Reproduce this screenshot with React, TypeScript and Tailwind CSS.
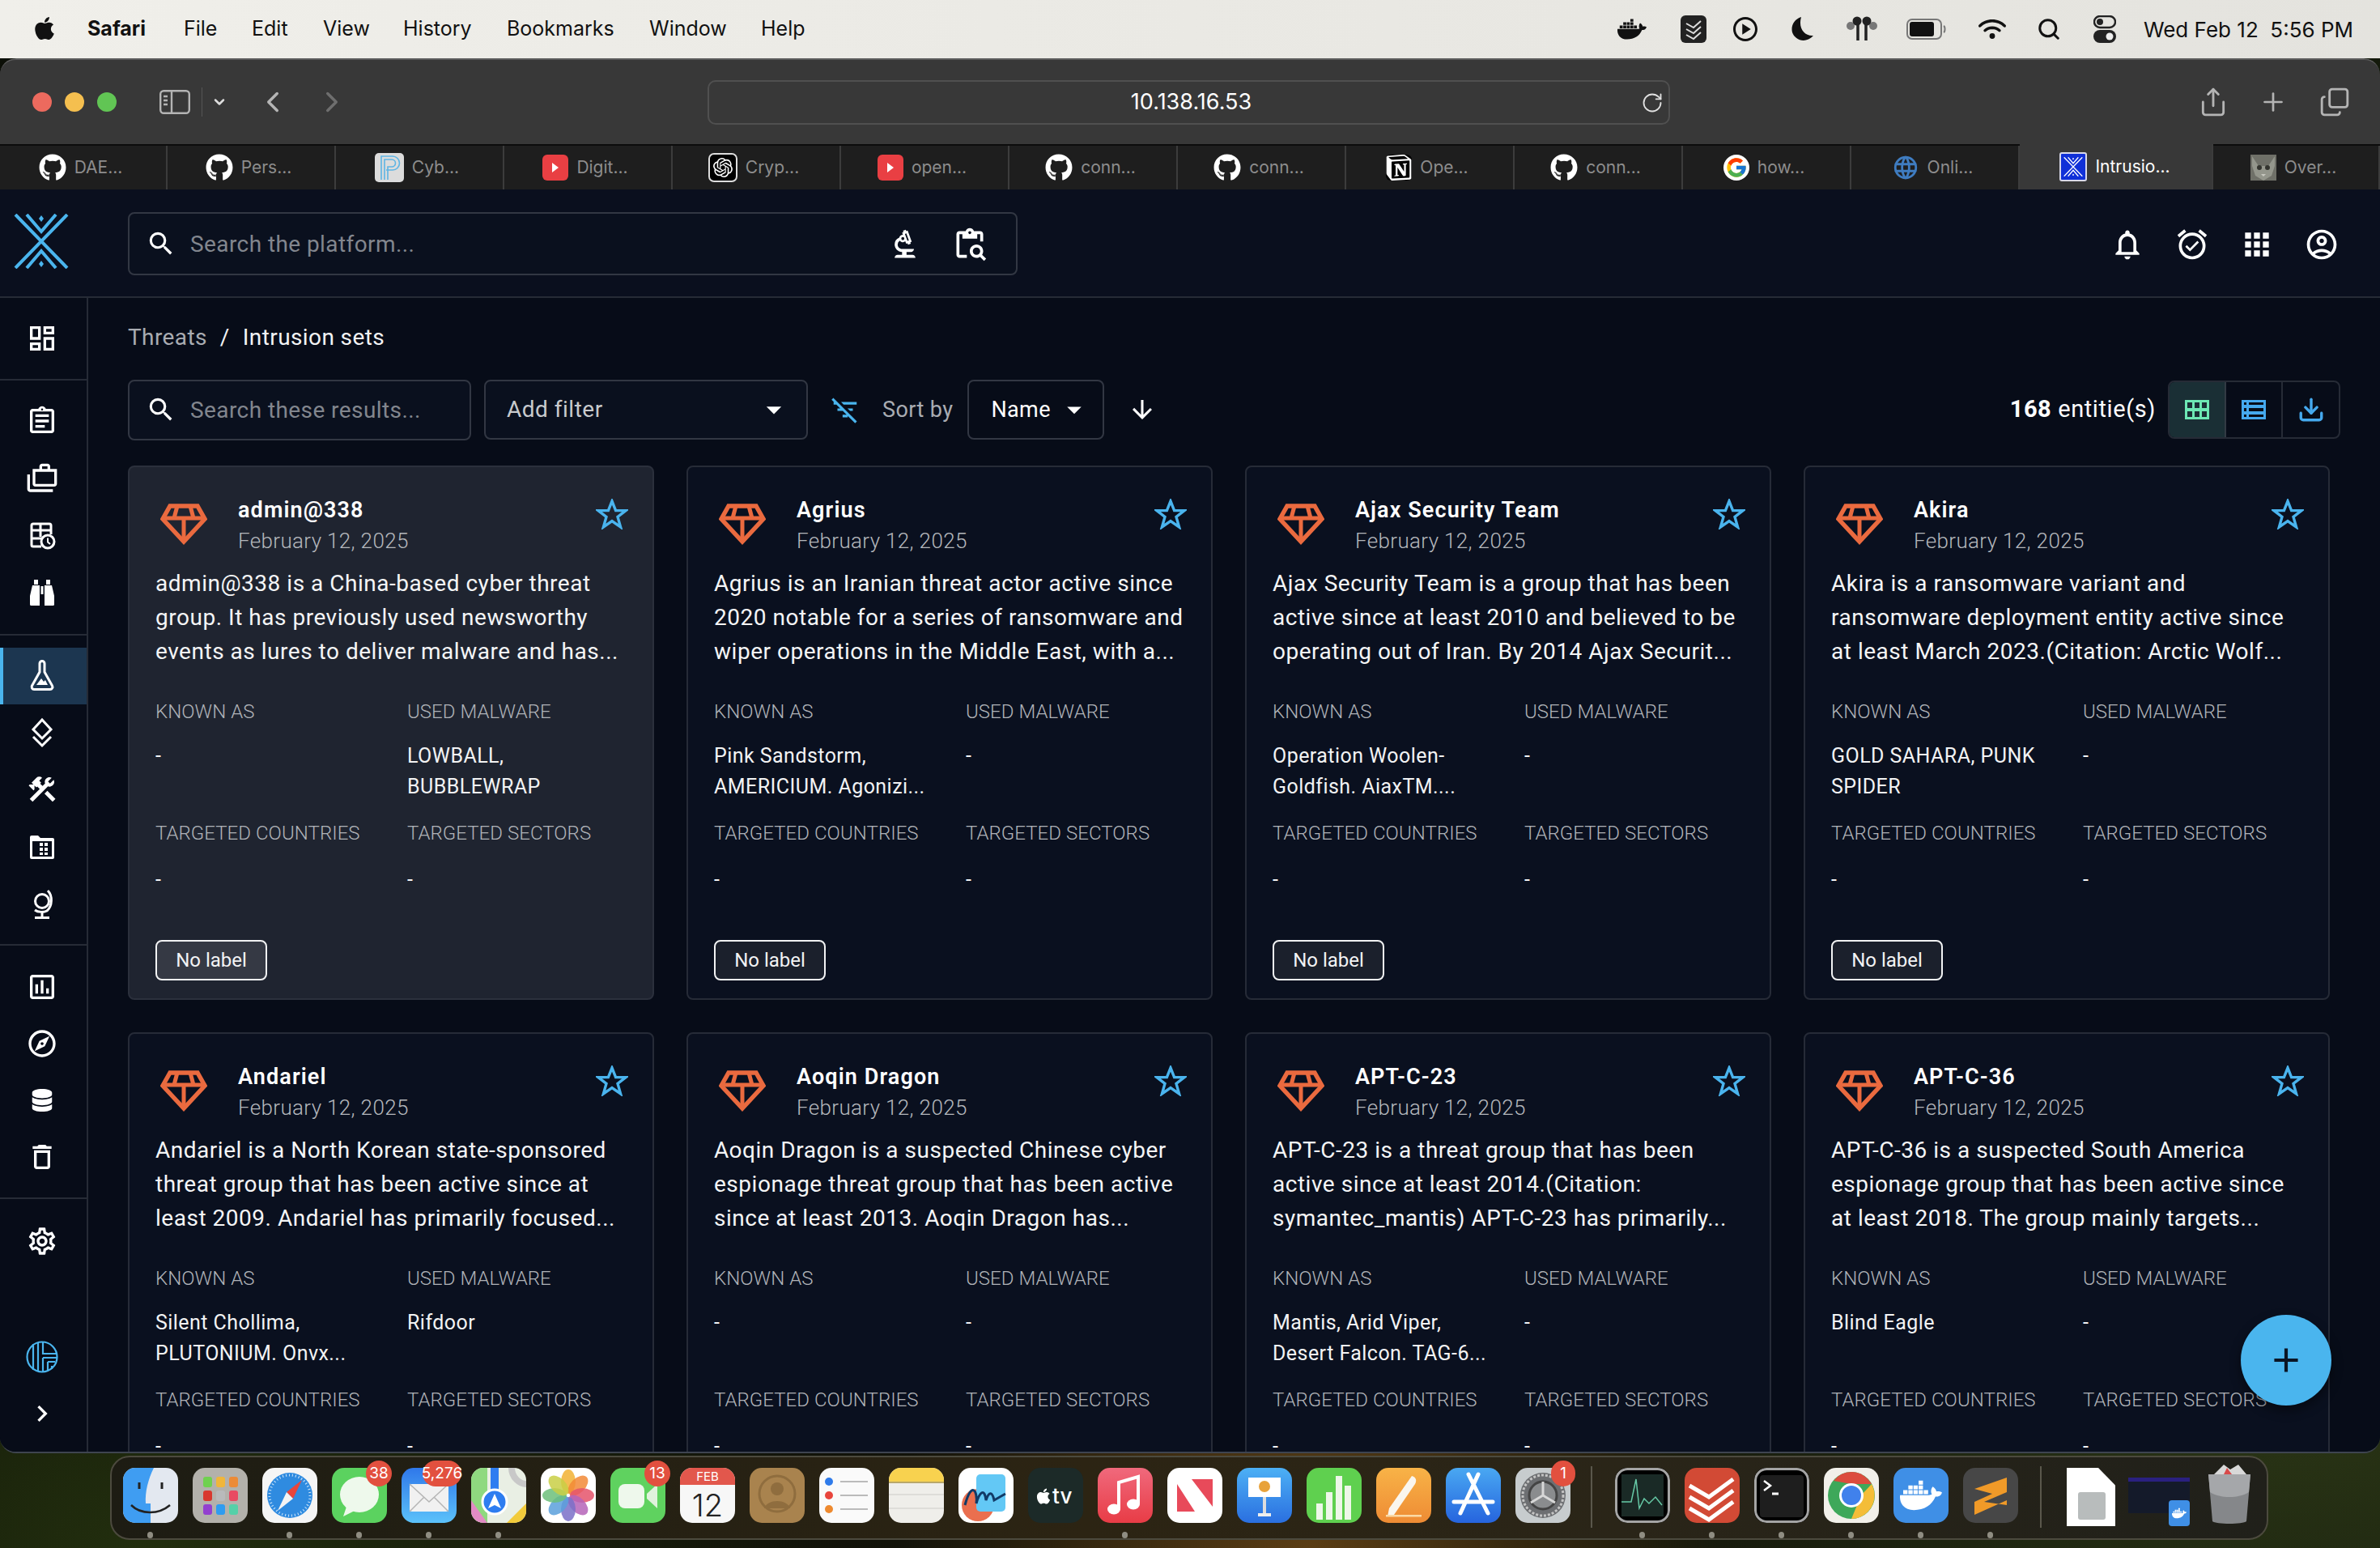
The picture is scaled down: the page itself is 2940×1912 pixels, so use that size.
import React from "react";
import { FaApple, FaDocker, FaGithub, FaWifi, FaDatabase } from "react-icons/fa6";
import { SiOpenai, SiNotion } from "react-icons/si";
import { FcGoogle } from "react-icons/fc";
import { TbWorld } from "react-icons/tb";
import {
  MdOutlineDashboard, MdOutlineAssignment, MdOutlineCases, MdOutlineConstruction,
  MdOutlineAssessment, MdOutlineExplore, MdOutlineDelete, MdOutlineSettings, MdChevronRight, MdOutlineSearch, MdOutlineBiotech,
  MdOutlineContentPasteSearch, MdOutlineNotifications, MdOutlineAlarmOn, MdApps, MdOutlineAccountCircle, MdFilterListOff,
  MdArrowDownward, MdArrowDropDown, MdAdd, MdOutlinePlayCircle,
} from "react-icons/md";
import { Search, Share, Plus, Copy, RotateCw, ChevronLeft, ChevronRight, ChevronDown, Download } from "lucide-react";

const Gem = () => (
  <svg width="58" height="52" viewBox="0 0 58 52" fill="none" stroke="#ea6a3f" strokeWidth="5.500" strokeLinejoin="miter">
    <path d="M12 3H46L55 19L29 47L3 19Z" />
    <path d="M3 18H55M29 18V47M21 3L17 18M37 3L41 18" strokeWidth="5" />
  </svg>
);

const Star = () => (
  <svg width="40" height="38" viewBox="0 0 40 38" fill="none" stroke="#4ab4ee" strokeWidth="3.400">
    <path d="M20 3L24.600 14.600H37L27 22.400L30.600 35L20 27.600L9.400 35L13 22.400L3 14.600H15.400Z" />
  </svg>
);

const OpenCtiLogo = ({ size = 68, color = "#4ab5ee" }: { size?: number; color?: string }) => (
  <svg width={size} height={size} viewBox="0 0 68 68" fill="none" stroke={color} strokeWidth="4">
    <path d="M2 1L66 67M66 1L2 67" />
    <path d="M16 1L34 22L52 1M16 67L34 46L52 67" />
    <path d="M34 2L37 6L34 10L31 6ZM34 58L37 62L34 66L31 62Z" fill={color} stroke="none" />
  </svg>
);

const FiligranLogo = () => (
  <svg width="40" height="40" viewBox="0 0 40 40" fill="none" stroke="#4ab5ee" strokeWidth="2.200">
    <circle cx="20" cy="20" r="18.500" />
    <path d="M9 4V36M15 2V38M21 2V16H38M21 21H38M21 21V38M27 26H36M27 26V37M32 31V35" />
  </svg>
);

const EventIcon = () => (
  <svg width="40" height="40" viewBox="0 0 40 40" fill="none" stroke="white" strokeWidth="3">
    <path d="M19 34H9a2 2 0 0 1-2-2V8a2 2 0 0 1 2-2h20a2 2 0 0 1 2 2v11" />
    <path d="M7 14H31M7 24H20M18 6V22" />
    <circle cx="27" cy="28" r="8" />
    <path d="M27 23.500V28.500L30 31" strokeWidth="2" />
  </svg>
);
const BinocularIcon = () => (
  <svg width="40" height="40" viewBox="0 0 40 40" fill="white">
    <path d="M10 4h5v6h-5zM25 4h5v6h-5zM8 11h9v25H6.500a1.500 1.500 0 0 1-1.500-1.500V24zM32 11h-9v25h10.500a1.500 1.500 0 0 0 1.500-1.500V24z" />
    <path d="M18.500 12h3v10h-3z" />
  </svg>
);
const FlaskIcon = () => (
  <svg width="40" height="40" viewBox="0 0 40 40" fill="none" stroke="white" strokeWidth="3">
    <path d="M17 4.500a3 3 0 0 1 6 0M17 4.500V15L7.500 32a3 3 0 0 0 2.600 4.500h19.800a3 3 0 0 0 2.600-4.500L23 15V4.500" />
    <path d="M13 31L19 23L22 27L24 25L27 31Z" fill="white" stroke="none" />
  </svg>
);
const LayersIcon = () => (
  <svg width="40" height="40" viewBox="0 0 40 40" fill="none" stroke="white" strokeWidth="3">
    <path d="M20 4L31 16L20 27L9 16Z" />
    <path d="M9 25L20 36L31 25" />
  </svg>
);
const FolderGridIcon = () => (
  <svg width="40" height="40" viewBox="0 0 40 40">
    <path d="M5 8a2 2 0 0 1 2-2h8l3 3h15a2 2 0 0 1 2 2v22a2 2 0 0 1-2 2H7a2 2 0 0 1-2-2z" fill="white" />
    <rect x="8" y="13" width="24" height="19" fill="#070d19" />
    <path d="M17 15h4v4h-4zM23 15h4v4h-4zM17 21h4v4h-4zM23 21h4v4h-4zM17 27h4v3h-4zM23 27h4v3h-4z" fill="white" />
  </svg>
);
const GlobeIcon = () => (
  <svg width="40" height="40" viewBox="0 0 40 40" fill="none" stroke="white" strokeWidth="3">
    <circle cx="20" cy="16" r="8.500" />
    <path d="M27 3C33 9 33 22 26 28C22 30 15 30 11 27M20 30V36M11 36.500H29" />
  </svg>
);
const GridViewIcon = () => (
  <svg width="30" height="24" viewBox="0 0 30 24" fill="#6de8b4">
    <path fillRule="evenodd" d="M0 0H30V24H0ZM3 3V10H9V3ZM12 3V10H18V3ZM21 3V10H27V3ZM3 14V21H9V14ZM12 14V21H18V14ZM21 14V21H27V14Z" />
  </svg>
);
const ListViewIcon = () => (
  <svg width="30" height="24" viewBox="0 0 30 24" fill="#45a9ee">
    <path fillRule="evenodd" d="M0 0H30V24H0ZM3 3V6H6V3ZM9 3V6H27V3ZM3 10V14H6V10ZM9 10V14H27V10ZM3 18V21H6V18ZM9 18V21H27V18Z" />
  </svg>
);

const I: React.FC<{ children: React.ReactNode; h?: string }> = ({ children, h = "h-[70px]" }) => <div className={`${h} flex items-center justify-center pr-[3px] text-white`}>{children}</div>;

const Sidebar = () => (
  <aside className="w-[109px] shrink-0 border-r-2 border-[#262b36] bg-[#070c18] flex flex-col">
    <div className="py-[15px] border-b-2 border-[#262b36]"><I><MdOutlineDashboard size={40} /></I></div>
    <div className="pt-[15px] pb-[16px] border-b-2 border-[#262b36]">
      <I h="h-[70.5px]"><MdOutlineAssignment size={40} /></I><I h="h-[70.5px]"><MdOutlineCases size={40} /></I><I h="h-[70.5px]"><EventIcon /></I><I h="h-[70.5px]"><BinocularIcon /></I>
    </div>
    <div className="pt-[15px] pb-[14px] border-b-2 border-[#262b36]">
      <div className="h-[70px] flex items-center justify-center text-white bg-[#1c3650] border-l-[4px] border-[#4ab5ee] pr-[7px]"><FlaskIcon /></div>
      <I><LayersIcon /></I><I><MdOutlineConstruction size={40} /></I><I h="h-[71px]"><FolderGridIcon /></I><I h="h-[71px]"><GlobeIcon /></I>
    </div>
    <div className="pt-[16px] pb-[15px] border-b-2 border-[#262b36]">
      <I><MdOutlineAssessment size={40} /></I><I><MdOutlineExplore size={40} /></I><I><FaDatabase size={28} /></I><I><MdOutlineDelete size={40} /></I>
    </div>
    <div className="pt-[17px]"><I><MdOutlineSettings size={40} /></I></div>
    <div className="mt-auto pb-[12px]"><I><FiligranLogo /></I><I><MdChevronRight size={40} /></I></div>
  </aside>
);

type C = { name: string; desc: string[]; known: string[]; malware: string[]; hover?: boolean };
const cards: C[] = [
  { name: "admin@338", hover: true, desc: ["admin@338 is a China-based cyber threat", "group. It has previously used newsworthy", "events as lures to deliver malware and has..."], known: ["-"], malware: ["LOWBALL,", "BUBBLEWRAP"] },
  { name: "Agrius", desc: ["Agrius is an Iranian threat actor active since", "2020 notable for a series of ransomware and", "wiper operations in the Middle East, with a..."], known: ["Pink Sandstorm,", "AMERICIUM. Agonizi..."], malware: ["-"] },
  { name: "Ajax Security Team", desc: ["Ajax Security Team is a group that has been", "active since at least 2010 and believed to be", "operating out of Iran. By 2014 Ajax Securit..."], known: ["Operation Woolen-", "Goldfish. AiaxTM...."], malware: ["-"] },
  { name: "Akira", desc: ["Akira is a ransomware variant and", "ransomware deployment entity active since", "at least March 2023.(Citation: Arctic Wolf..."], known: ["GOLD SAHARA, PUNK", "SPIDER"], malware: ["-"] },
  { name: "Andariel", desc: ["Andariel is a North Korean state-sponsored", "threat group that has been active since at", "least 2009. Andariel has primarily focused..."], known: ["Silent Chollima,", "PLUTONIUM. Onvx..."], malware: ["Rifdoor"] },
  { name: "Aoqin Dragon", desc: ["Aoqin Dragon is a suspected Chinese cyber", "espionage threat group that has been active", "since at least 2013. Aoqin Dragon has..."], known: ["-"], malware: ["-"] },
  { name: "APT-C-23", desc: ["APT-C-23 is a threat group that has been", "active since at least 2014.(Citation:", "symantec_mantis) APT-C-23 has primarily..."], known: ["Mantis, Arid Viper,", "Desert Falcon. TAG-6..."], malware: ["-"] },
  { name: "APT-C-36", desc: ["APT-C-36 is a suspected South America", "espionage group that has been active since", "at least 2018. The group mainly targets..."], known: ["Blind Eagle"], malware: ["-"] },
];

const Label = ({ children }: { children: React.ReactNode }) => <div className="h-[36px] leading-[36px] text-[24px] tracking-[0.05px] font-light text-[#b0b3b8] whitespace-nowrap">{children}</div>;
const Val = ({ lines }: { lines: string[] }) => <div className="text-[25px] leading-[38px] tracking-[0.45px] text-[#f2f3f4] whitespace-nowrap">{lines.map((l) => <div key={l}>{l}</div>)}</div>;

const Card = ({ c }: { c: C }) => (
  <div className={`h-[660px] rounded-[8px] border-2 px-[32px] ${c.hover ? "bg-[#1f2430] border-[#2b303c]" : "bg-[#0a101f] border-[#262b37]"}`}>
    <div className="flex pt-[33px] h-[113px]">
      <div className="ml-[6px] mt-[12px] w-[58px]"><Gem /></div>
      <div className="ml-[38px]">
        <div className="h-[38px] pt-[1px] leading-[38px] text-[27px] font-semibold text-white tracking-[1.1px] whitespace-nowrap">{c.name}</div>
        <div className="h-[40px] leading-[40px] text-[26px] tracking-[0.35px] font-light text-[#b4b7bc] whitespace-nowrap">February 12, 2025</div>
      </div>
      <div className="ml-auto mt-[6px] -mr-[2px]"><Star /></div>
    </div>
    <div className="mt-[10px] text-[28px] leading-[42px] tracking-[0.52px] text-[#f4f5f6] whitespace-nowrap">{c.desc.map((l) => <div key={l}>{l}</div>)}</div>
    <div className="mt-[35px] grid grid-cols-[311px_1fr]">
      <div><Label>KNOWN AS</Label></div><div><Label>USED MALWARE</Label></div>
      <div className="mt-[18px] h-[76px]"><Val lines={c.known} /></div><div className="mt-[18px] h-[76px]"><Val lines={c.malware} /></div>
      <div className="mt-[20px] h-[38px]"><Label>TARGETED COUNTRIES</Label></div><div className="mt-[20px] h-[38px]"><Label>TARGETED SECTORS</Label></div>
      <div className="mt-[19px] h-[38px]"><Val lines={["-"]} /></div><div className="mt-[19px] h-[38px]"><Val lines={["-"]} /></div>
    </div>
    <div className={`mt-[55px] w-[138px] h-[50px] rounded-[8px] border-2 border-[#f2f3f4] flex items-center justify-center text-[24px] text-[#f2f3f4] ${c.hover ? "bg-[#353944]" : "bg-[#1b202c]"}`}>No label</div>
  </div>
);

const Box = ({ className, children }: { className: string; children: React.ReactNode }) => (
  <div className={`rounded-[8px] border-2 border-[#323743] flex items-center ${className}`}>{children}</div>
);

const App_OpenCTI = () => (
  <div className="relative flex-1 min-h-0 flex flex-col bg-[#070c18] [font-family:Roboto,sans-serif]">
    <header className="h-[134px] shrink-0 border-b-2 border-[#262b36] bg-[#0a0f1e] flex items-center">
      <div className="w-[109px] pl-[17px] shrink-0 -mt-[4px]"><OpenCtiLogo /></div>
      <div className="ml-[49px] mt-[1px]">
        <Box className="w-[1099px] h-[78px] pl-[20px] pr-[10px] bg-[#0a101e]">
          <MdOutlineSearch size={38} className="text-white" />
          <span className="ml-[17px] mt-[3px] text-[28px] tracking-[0.42px] text-[#82868e]">Search the platform...</span>
          <div className="ml-auto flex gap-[36px] text-white pr-[25px] mt-[2px]">
            <MdOutlineBiotech size={44} /><MdOutlineContentPasteSearch size={44} />
          </div>
        </Box>
      </div>
      <div className="ml-auto pr-[50px] flex gap-[36px] text-white mt-[3px]">
        <MdOutlineNotifications size={44} /><MdOutlineAlarmOn size={44} /><MdApps size={44} /><MdOutlineAccountCircle size={44} />
      </div>
    </header>
    <div className="flex flex-1 min-h-0">
      <Sidebar />
      <main className="flex-1 pl-[49px] pr-[49px] overflow-hidden">
        <div className="h-[101px] pt-[31px] text-[28px] leading-[36px] tracking-[0.4px] text-[#f2f3f4] flex">
          <span className="text-[#a9acb2]">Threats</span><span className="mx-[16px]">/</span><span>Intrusion sets</span>
        </div>
        <div className="flex items-center h-[74px]">
          <Box className="w-[424px] h-[75px] pl-[20px] bg-[#0a101e]">
            <MdOutlineSearch size={38} className="text-white" />
            <span className="ml-[17px] mt-[2px] text-[28px] tracking-[0.42px] text-[#82868e]">Search these results...</span>
          </Box>
          <Box className="ml-[16px] w-[400px] h-[74px] pl-[26px] pr-[18px] bg-[#0a101e]">
            <span className="text-[28px] tracking-[0.5px] text-[#c8cacd]">Add filter</span>
            <MdArrowDropDown size={44} className="ml-auto text-white" />
          </Box>
          <MdFilterListOff size={38} className="ml-[27px] text-[#4ab5ee]" />
          <span className="ml-[27px] text-[27px] tracking-[0.4px] text-[#a9acb2]">Sort by</span>
          <Box className="ml-[18px] w-[169px] h-[74px] pl-[27px] pr-[14px]">
            <span className="text-[27px] text-white tracking-[0.4px]">Name</span>
            <MdArrowDropDown size={42} className="ml-auto text-white" />
          </Box>
          <MdArrowDownward size={36} className="ml-[29px] text-white" />
          <div className="ml-auto text-[29px] tracking-[0.6px] text-white"><span className="font-bold">168</span> entitie(s)</div>
          <div className="ml-[15px] flex h-[72px] rounded-[8px] border-2 border-[#262b36] overflow-hidden">
            <div className="w-[70px] bg-[#1a2f35] flex items-center justify-center border-r-2 border-[#323a44]"><GridViewIcon /></div>
            <div className="w-[70px] flex items-center justify-center border-r-2 border-[#262b36]"><ListViewIcon /></div>
            <div className="w-[69px] flex items-center justify-center text-[#45a9ee]"><Download size={34} strokeWidth={2.400} /></div>
          </div>
        </div>
        <div className="mt-[32px] grid grid-cols-[repeat(4,650px)] gap-[40px]">
          {cards.map((c) => <Card key={c.name} c={c} />)}
        </div>
      </main>
    </div>
    <div className="absolute left-[2768px] top-[1390px] w-[112px] h-[112px] rounded-full bg-[#4ab5ee] flex items-center justify-center text-[#0b1524] shadow-[0_6px_14px_rgba(0,0,0,0.45)]"><MdAdd size={50} /></div>
  </div>
);

const Yt = () => <div className="w-[32px] h-[32px] rounded-[6px] bg-[#e93f43] flex items-center justify-center"><div className="w-0 h-0 border-y-[6px] border-y-transparent border-l-[8px] border-l-white" /></div>;
const Gh = () => <FaGithub size={34} color="white" />;
const PP = () => (
  <svg width="36" height="36" viewBox="0 0 36 36"><rect width="36" height="36" rx="5" fill="#dcdcdc" /><path d="M8 33V4H22a8 8 0 0 1 0 17H14M12 33V8H21a4 4 0 0 1 0 9H16V33" fill="none" stroke="#5db4e4" strokeWidth="1.600" /></svg>
);
const Ai = () => <div className="w-[36px] h-[36px] rounded-[7px] bg-black flex items-center justify-center border-2 border-[#ddd]"><SiOpenai size={24} color="white" /></div>;
const No = () => <div className="w-[32px] h-[32px] rounded-[6px] bg-black flex items-center justify-center"><SiNotion size={32} color="white" /></div>;
const Go = () => <div className="w-[32px] h-[32px] rounded-full bg-white flex items-center justify-center"><FcGoogle size={28} /></div>;
const Cti = () => <div className="w-[34px] h-[36px] rounded-[3px] bg-[#1030d8] border-2 border-[#d8d8e8] flex items-center justify-center"><OpenCtiLogo size={24} color="white" /></div>;
const Kitten = () => (
  <svg width="32" height="32" viewBox="0 0 32 32"><rect width="32" height="32" fill="#6f7068" /><path d="M2 2L10 14H22L30 2V14L26 26L16 32L6 26L2 14Z" fill="#94968c" /><circle cx="11" cy="16" r="3" fill="#33342f" /><circle cx="21" cy="16" r="3" fill="#33342f" /><path d="M13 24h6l-3 3z" fill="#c7c8c0" /></svg>
);

const tabs: { t: string; i: React.ReactNode; w: number; a?: boolean }[] = [
  { t: "DAE...", i: <Gh />, w: 207 }, { t: "Pers...", i: <Gh />, w: 208 }, { t: "Cyb...", i: <PP />, w: 208 }, { t: "Digit...", i: <Yt />, w: 208 },
  { t: "Cryp...", i: <Ai />, w: 208 }, { t: "open...", i: <Yt />, w: 208 }, { t: "conn...", i: <Gh />, w: 208 }, { t: "conn...", i: <Gh />, w: 208 },
  { t: "Ope...", i: <No />, w: 208 }, { t: "conn...", i: <Gh />, w: 208 }, { t: "how...", i: <Go />, w: 208 },
  { t: "Onli...", i: <TbWorld size={34} color="#3f7cc0" />, w: 208 }, { t: "Intrusio...", i: <Cti />, w: 239, a: true }, { t: "Over...", i: <Kitten />, w: 206 },
];

const MenuBar = () => (
  <div className="h-[72px] shrink-0 bg-[linear-gradient(90deg,#f0efea,#e4e3de)] flex items-center text-[#111] text-[25px] [font-family:Inter,sans-serif] relative">
    <FaApple size={32} className="ml-[39px] -mt-[3px]" />
    <span className="ml-[37px] font-bold w-[119px]">Safari</span>
    <span className="w-[84px]">File</span><span className="w-[88px]">Edit</span><span className="w-[99px]">View</span><span className="w-[128px]">History</span>
    <span className="w-[176px]">Bookmarks</span><span className="w-[138px]">Window</span><span>Help</span>
    <div className="ml-auto flex items-center pr-[33px]">
      <FaDocker size={36} />
      <svg width="32" height="34" viewBox="0 0 32 34" className="ml-[42px]"><rect width="32" height="34" rx="6" fill="#222" /><path d="M7 10l9 5 9-8M7 17l9 5 9-8M7 24l9 5 9-8" stroke="#ddd" strokeWidth="2" fill="none" /></svg>
      <MdOutlinePlayCircle size={36} className="ml-[30px]" />
      <svg width="30" height="32" viewBox="0 0 30 32" className="ml-[38px]"><path d="M13 1C4 4 0 12 2 20C5 29 18 35 28 24C17 25 9 15 13 1Z" fill="#111" /></svg>
      <svg width="40" height="32" viewBox="0 0 40 32" className="ml-[38px]"><circle cx="6" cy="12" r="5" fill="#777" /><circle cx="34" cy="12" r="5" fill="#777" /><circle cx="14" cy="6" r="5.500" fill="#222" /><circle cx="26" cy="6" r="5.500" fill="#222" /><path d="M15 10v20M25 10v20" stroke="#222" strokeWidth="3.500" /></svg>
      <svg width="50" height="26" viewBox="0 0 50 26" className="ml-[35px]"><rect x="1" y="1" width="42" height="24" rx="6" fill="none" stroke="#777" strokeWidth="2" /><rect x="4" y="4" width="30" height="18" rx="3" fill="#111" /><path d="M46 9c2 1 2 7 0 8" stroke="#777" strokeWidth="2" fill="none" /></svg>
      <FaWifi size={34} className="ml-[39px]" />
      <Search size={30} strokeWidth={2.400} className="ml-[38px]" />
      <svg width="28" height="34" viewBox="0 0 28 34" className="ml-[40px]"><rect x="1" y="1" width="26" height="14" rx="7" fill="none" stroke="#222" strokeWidth="2.400" /><circle cx="8" cy="8" r="4" fill="#222" /><rect y="18" width="28" height="16" rx="8" fill="#222" /><circle cx="20" cy="26" r="4.500" fill="#eee" /></svg>
      <span className="ml-[34px] whitespace-pre text-[26px]">Wed Feb 12  5:56 PM</span>
    </div>
  </div>
);

const Toolbar = () => (
  <div className="h-[106px] shrink-0 bg-[#383838] border-t-2 border-[#5c5c5c] rounded-t-[20px] flex items-center relative text-[#b4b4b4]">
    <div className="flex gap-[16px] ml-[40px]">
      <div className="w-[24px] h-[24px] rounded-full bg-[#ec6a5e]" /><div className="w-[24px] h-[24px] rounded-full bg-[#f5bf4f]" /><div className="w-[24px] h-[24px] rounded-full bg-[#61c554]" />
    </div>
    <svg width="38" height="30" viewBox="0 0 38 30" fill="none" stroke="#b4b4b4" strokeWidth="2.400" className="ml-[53px]"><rect x="1.200" y="1.200" width="35.600" height="27.600" rx="4" /><path d="M15 1v28M5 8h5M5 13h5M5 18h5" /></svg>
    <div className="w-[1px] h-[36px] bg-[#555] ml-[14px]" />
    <ChevronDown size={20} strokeWidth={3} className="ml-[11px] text-[#ddd]" />
    <ChevronLeft size={42} strokeWidth={2} className="ml-[35px]" />
    <ChevronRight size={42} strokeWidth={2} className="ml-[31px] text-[#6e6e6e]" />
    <div className="ml-[443px] w-[1189px] h-[55px] pl-[6px] rounded-[10px] border-2 border-[#505050] relative flex items-center justify-center text-[27px] text-white [font-family:Inter,sans-serif]">
      10.138.16.53
      <RotateCw size={28} strokeWidth={1.600} className="absolute right-[6px] top-[12px] text-[#e0e0e0]" />
    </div>
    <Share size={38} strokeWidth={1.800} className="ml-[652px]" />
    <Plus size={36} strokeWidth={1.800} className="ml-[37px]" />
    <Copy size={38} strokeWidth={1.800} className="ml-[39px] -scale-x-100 rotate-180" />
  </div>
);

const Tabs = () => (
  <div className="h-[56px] shrink-0 bg-[#1e1e1e] border-t-2 border-[#0c0c0c] flex [font-family:Inter,sans-serif] text-[21px]">
    {tabs.map((x, i) => (
      <div key={i} style={{ width: x.w }} className={`shrink-0 flex items-center justify-center gap-[10px] border-r-2 border-[#3c3c3c] ${x.a ? "bg-[#383838] text-white -mt-[2px] pr-[2px]" : "text-[#8d8d8d] pr-[6px]"}`}>
        {x.i}<span>{x.t}</span>
      </div>
    ))}
  </div>
);

const S: React.FC<{ children: React.ReactNode }> = ({ children }) => <svg width="68" height="68" viewBox="0 0 68 68">{children}</svg>;
const dock: { k: string; dot?: boolean; badge?: string; bw?: number; el: React.ReactNode }[] = [
  { k: "finder", dot: true, el: <S><rect width="68" height="68" fill="#e3e8f0" /><path d="M0 0H38C31 14 27 30 28 44L34 44V68H0Z" fill="#3f9df2" /><path d="M20 18v8M48 18v8" stroke="#222" strokeWidth="3" /><path d="M10 46C22 58 44 58 58 46" stroke="#222" strokeWidth="2.500" fill="none" /></S> },
  { k: "launch", el: <S><rect width="68" height="68" fill="#b3b1ab" />{[["#6fd14f", "#f0b63a", "#ec8b36"], ["#d8382e", "#b9babb", "#e84a62"], ["#9340cf", "#2f9cf0", "#55d0a8"]].flatMap((r, y) => r.map((c, x) => <rect key={`${x}${y}`} x={13 + x * 16} y={11 + y * 17} width="11" height="13" rx="3" fill={c} />))}</S> },
  { k: "safari", dot: true, el: <S><rect width="68" height="68" fill="#f5f5f5" /><circle cx="34" cy="34" r="28" fill="#2f8be0" /><circle cx="34" cy="34" r="25" fill="none" stroke="#cfe6fb" strokeWidth="3" strokeDasharray="1 3" /><path d="M49 15L30 30L38 38Z" fill="#e8453c" /><path d="M19 53L30 30L38 38Z" fill="#f4f4f4" /></S> },
  { k: "messages", dot: true, badge: "38", el: <S><rect width="68" height="68" fill="#5bd25f" /><ellipse cx="34" cy="33" rx="24" ry="22" fill="#eef9ec" /><path d="M18 48L14 60L30 52Z" fill="#eef9ec" /></S> },
  { k: "mail", dot: true, badge: "5,276", bw: 48, el: <S><defs><linearGradient id="m" x1="0" y1="0" x2="0" y2="1"><stop offset="0" stopColor="#2f78ea" /><stop offset="1" stopColor="#5cc2fa" /></linearGradient></defs><rect width="68" height="68" fill="url(#m)" /><rect x="10" y="20" width="48" height="34" rx="3" fill="#f1f1f1" /><path d="M10 20L34 42L58 20M10 54L28 36M58 54L40 36" stroke="#b5b5b5" strokeWidth="1.500" fill="none" /></S> },
  { k: "maps", dot: true, el: <S><rect width="68" height="68" fill="#e9efe4" /><path d="M0 0H20V68H0Z" fill="#8fd97f" /><path d="M0 40L20 68H0Z" fill="#e28bc4" /><path d="M44 68L68 44V68Z" fill="#f2cb3b" /><path d="M50 0C50 12 60 20 68 20" stroke="#c8c8c8" strokeWidth="8" fill="none" /><rect x="24" y="0" width="10" height="40" fill="#2e7df0" /><circle cx="29" cy="42" r="15" fill="#2e7df0" stroke="#fff" strokeWidth="3" /><path d="M29 32L37 50L29 46L21 50Z" fill="#fff" /></S> },
  { k: "photos", el: <S><rect width="68" height="68" fill="#fff" />{["#f2b134", "#f28a36", "#e5536b", "#b564b8", "#7a70c8", "#5aa0dc", "#6cc07a", "#c9cf45"].map((c, i) => <ellipse key={c} cx="34" cy="17" rx="9" ry="15" fill={c} opacity="0.85" transform={`rotate(${i * 45 + 0} 34 34)`} />)}</S> },
  { k: "ft", badge: "13", el: <S><rect width="68" height="68" fill="#5fd25f" /><rect x="10" y="20" width="32" height="30" rx="8" fill="#eef8ec" /><path d="M45 32L58 20V50L45 38Z" fill="#dff2dc" /></S> },
  { k: "cal", el: <S><rect width="68" height="68" fill="#f7f7f7" /><rect width="68" height="21" fill="#e2574c" /><text x="34" y="16" textAnchor="middle" fontSize="15" fill="#fff" fontFamily="Inter">FEB</text><text x="34" y="60" textAnchor="middle" fontSize="38" fill="#222" fontFamily="Inter" fontWeight="300">12</text></S> },
  { k: "contacts", el: <S><rect width="68" height="68" fill="#a9834e" /><circle cx="34" cy="32" r="22" fill="none" stroke="#8f6d3e" strokeWidth="3" /><circle cx="34" cy="26" r="8" fill="#8f6d3e" /><path d="M18 50C22 38 46 38 50 50" fill="#8f6d3e" /></S> },
  { k: "rem", el: <S><rect width="68" height="68" fill="#fafafa" /><circle cx="12" cy="17" r="5" fill="#2f7bea" /><circle cx="12" cy="34" r="5" fill="#e8453c" /><circle cx="12" cy="51" r="5" fill="#ee8a2f" /><path d="M26 17H60M26 34H60M26 51H60" stroke="#bbb" strokeWidth="2" /></S> },
  { k: "notes", el: <S><rect width="68" height="68" fill="#efeeea" /><rect width="68" height="17" fill="#f8d24f" /><rect y="17" width="68" height="2" fill="#b9a76a" /><path d="M0 33H68M0 50H68" stroke="#d9d8d4" strokeWidth="1.500" /></S> },
  { k: "free", el: <S><rect width="68" height="68" fill="#fff" /><circle cx="24" cy="46" r="20" fill="#ea6f4f" /><rect x="22" y="8" width="36" height="46" rx="5" fill="#63c8f5" /><path d="M8 46C16 16 24 28 22 44C26 30 32 24 34 40C38 28 42 30 44 40L58 32" stroke="#123a66" strokeWidth="3" fill="none" /></S> },
  { k: "tv", el: <S><rect width="68" height="68" fill="#1c2a28" /><foreignObject x="8" y="24" width="22" height="24"><FaApple size={22} color="#fff" /></foreignObject><text x="30" y="44" fontSize="26" fill="#fff" fontFamily="Inter" fontWeight="500">tv</text></S> },
  { k: "music", dot: true, el: <S><defs><linearGradient id="mu" x1="0" y1="0" x2="0" y2="1"><stop offset="0" stopColor="#f0697c" /><stop offset="1" stopColor="#e83c46" /></linearGradient></defs><rect width="68" height="68" fill="url(#mu)" /><path d="M26 50V18L50 11V44" stroke="#fff" strokeWidth="4" fill="none" /><ellipse cx="20" cy="51" rx="8" ry="6.500" fill="#fff" /><ellipse cx="44" cy="45" rx="8" ry="6.500" fill="#fff" /></S> },
  { k: "news", el: <S><rect width="68" height="68" fill="#fff" /><path d="M12 20L34 54H12ZM30 14H56V48Z" fill="#e84a5a" /></S> },
  { k: "key", el: <S><defs><linearGradient id="k" x1="0" y1="0" x2="0" y2="1"><stop offset="0" stopColor="#4cb0f5" /><stop offset="1" stopColor="#2a6fe0" /></linearGradient></defs><rect width="68" height="68" fill="url(#k)" /><rect x="14" y="12" width="40" height="24" fill="#fff" /><circle cx="34" cy="23" r="7" fill="#e8a23a" /><path d="M34 36V58" stroke="#ddd" strokeWidth="4" /><rect x="26" y="56" width="16" height="4" fill="#eee" /></S> },
  { k: "num", el: <S><rect width="68" height="68" fill="#5fd04f" /><rect x="12" y="44" width="8" height="20" fill="#eef7e9" /><rect x="24" y="30" width="8" height="34" fill="#eef7e9" /><rect x="36" y="10" width="8" height="54" fill="#eef7e9" /><rect x="47" y="22" width="8" height="42" fill="#eef7e9" /></S> },
  { k: "pages", el: <S><defs><linearGradient id="p" x1="0" y1="0" x2="0" y2="1"><stop offset="0" stopColor="#f8b347" /><stop offset="1" stopColor="#ee8b34" /></linearGradient></defs><rect width="68" height="68" fill="url(#p)" /><path d="M44 10C50 12 50 16 48 20L22 58L14 60L16 50Z" fill="#faf6ee" /><rect x="12" y="58" width="44" height="2.500" fill="#fbd9a5" /></S> },
  { k: "store", el: <S><defs><linearGradient id="s" x1="0" y1="0" x2="0" y2="1"><stop offset="0" stopColor="#49a8f2" /><stop offset="1" stopColor="#2664de" /></linearGradient></defs><rect width="68" height="68" fill="url(#s)" /><path d="M40 8L18 56M28 8L52 56M10 42H58" stroke="#fff" strokeWidth="5" strokeLinecap="round" /></S> },
  { k: "set", badge: "1", bw: 30, el: <S><rect width="68" height="68" fill="#c7ccce" /><circle cx="34" cy="34" r="28" fill="#6d6f72" /><circle cx="34" cy="34" r="25" fill="none" stroke="#c4c4c4" strokeWidth="3" strokeDasharray="3 2" /><circle cx="34" cy="34" r="17" fill="#8a8c8e" stroke="#444" strokeWidth="3" /><path d="M34 34V17M34 34L19 43M34 34L49 43" stroke="#d8d8d8" strokeWidth="3" /></S> },
  { k: "sep1", el: null },
  { k: "act", dot: true, el: <S><rect width="68" height="68" fill="#000" /><rect x="1.500" y="1.500" width="65" height="65" rx="14" fill="none" stroke="#a4a4a4" strokeWidth="3" /><rect x="8" y="8" width="52" height="52" fill="#1a2a26" /><path d="M8 42H20L26 14L30 50L36 38L42 44L50 36L58 46" stroke="#66c9a6" strokeWidth="1.500" fill="none" /></S> },
  { k: "todo", dot: true, el: <S><rect width="68" height="68" fill="#d24a35" /><path d="M6 22L30 36L60 14M6 36L30 50L60 28M6 50L30 64L60 42" stroke="#fff" strokeWidth="5" fill="none" /></S> },
  { k: "term", dot: true, el: <S><rect width="68" height="68" fill="#000" /><rect x="1.500" y="1.500" width="65" height="65" rx="14" fill="none" stroke="#a4a4a4" strokeWidth="3" /><rect x="7" y="9" width="54" height="52" rx="4" fill="#1e1e1e" /><path d="M12 16L20 22L12 28" stroke="#fff" strokeWidth="2.500" fill="none" /><path d="M22 32H30" stroke="#fff" strokeWidth="3" /></S> },
  { k: "chrome", dot: true, el: <S><rect width="68" height="68" fill="#f2f0ea" /><circle cx="34" cy="34" r="29" fill="#3ea85a" /><path d="M34 5A29 29 0 0 1 59 20H34L12 16A29 29 0 0 1 34 5Z" fill="#dc4c3e" /><path d="M59 20A29 29 0 0 1 34 63L46 34Z" fill="#f4bd38" /><circle cx="34" cy="34" r="15" fill="#fff" /><circle cx="34" cy="34" r="12" fill="#4081ec" /></S> },
  { k: "docker", dot: true, el: <div className="w-[68px] h-[68px] bg-[#3f8fe6] flex items-center justify-center"><FaDocker size={52} color="#fff" /></div> },
  { k: "sub", dot: true, el: <S><rect width="68" height="68" fill="#474747" /><path d="M54 12V30L26 42L54 46V40L14 58V42L36 32L14 26Z" fill="#f09a28" /></S> },
];

const Dock = () => (
  <div className="ml-[136px] mt-[3px] w-[2666px] h-[104px] rounded-[24px] border-2 border-[#4c4a3e] bg-[linear-gradient(90deg,#1d1c13,#2c2413_45%,#2a2518_70%,#20201a)] flex items-start pt-[13px] pl-[14px] gap-[18px]">
    {dock.map((d) =>
      d.k === "sep1" ? (
        <div key={d.k} className="w-[2px] h-[76px] -mt-[2px] bg-[#5a574b] mr-[10px] ml-[7px]" />
      ) : (
        <div key={d.k} className="relative w-[68px] h-[68px]">
          <div className="w-[68px] h-[68px] rounded-[15px] overflow-hidden">{d.el}</div>
          {d.badge && (
            <div style={{ width: d.bw ?? 32 }} className="absolute -top-[9px] -right-[6px] h-[32px] rounded-full bg-[#e2503f] text-white text-[19px] flex items-center justify-center [font-family:Inter,sans-serif]">{d.badge}</div>
          )}
          {d.dot && <div className="absolute left-[30px] top-[79px] w-[7px] h-[8px] rounded-full bg-[#8f8d82]" />}
        </div>
      )
    )}
    <div className="w-[2px] h-[76px] -mt-[2px] bg-[#5a574b] ml-[9px]" />
    <div className="relative w-[60px] h-[72px] ml-[13px] bg-white [clip-path:polygon(0_0,65%_0,100%_30%,100%_100%,0_100%)]">
      <div className="absolute left-[14px] top-[30px] w-[34px] h-[34px] rounded-[3px] bg-[#b8bcbc]" />
    </div>
    <div className="relative w-[76px] h-[44px] mt-[12px] -ml-[2px] bg-[#141a2a] border-t-[5px] border-[#2a2080]">
      <div className="absolute right-0 -bottom-[16px] w-[26px] h-[32px] rounded-[4px] bg-[#3f8fe6] flex items-center justify-center"><FaDocker size={18} color="#fff" /></div>
    </div>
    <svg width="58" height="76" viewBox="0 0 58 76" className="-mt-[6px] ml-[2px]"><path d="M3 14H55L50 72C46 76 12 76 8 72Z" fill="#85878a" /><path d="M3 14H55L53 36C40 44 18 44 5 36Z" fill="#a5a7aa" /><path d="M10 14L22 2L30 8L40 2L50 14Z" fill="#d8d8d8" /><path d="M22 14L26 6L32 14" fill="#d84a4a" /></svg>
  </div>
);

export default function App() {
  return (
    <div className="w-[2940px] h-[1912px] overflow-hidden flex flex-col bg-[radial-gradient(ellipse_at_6%_100%,#222e0e,transparent_22%),radial-gradient(ellipse_at_55%_100%,#5a3d14,transparent_22%),radial-gradient(ellipse_at_96%_90%,#2b3616,transparent_22%),linear-gradient(90deg,#0c0f07,#14140a_50%,#141a0c)]">
      <MenuBar />
      <div className="h-[1723px] shrink-0 flex flex-col rounded-t-[20px] rounded-b-[20px] overflow-hidden border-b-2 border-[#3e4450] shadow-[inset_2px_0_0_#2a2a2a]">
        <Toolbar />
        <Tabs />
        <App_OpenCTI />
      </div>
      <Dock />
    </div>
  );
}
